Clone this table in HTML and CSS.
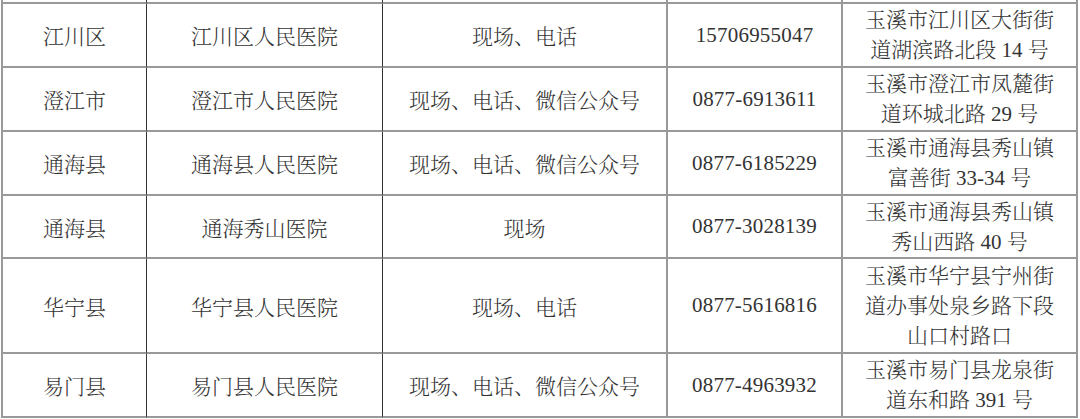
FILE: index.html
```html
<!DOCTYPE html>
<html lang="zh-CN">
<head>
<meta charset="utf-8">
<title>玉溪市医院</title>
<link rel="stylesheet" href="styles.css">
</head>
<body>
<div class="table">
  <div class="cell c1"></div><div class="cell c2"></div><div class="cell c3"></div><div class="cell c4"></div><div class="cell c5"></div>

  <div class="cell c1">江川区</div>
  <div class="cell c2">江川区人民医院</div>
  <div class="cell c3">现场、电话</div>
  <div class="cell c4 num">15706955047</div>
  <div class="cell c5 addr">玉溪市江川区大街街<br>道湖滨路北段 14 号</div>

  <div class="cell c1">澄江市</div>
  <div class="cell c2">澄江市人民医院</div>
  <div class="cell c3">现场、电话、微信公众号</div>
  <div class="cell c4 num">0877-6913611</div>
  <div class="cell c5 addr">玉溪市澄江市凤麓街<br>道环城北路 29 号</div>

  <div class="cell c1">通海县</div>
  <div class="cell c2">通海县人民医院</div>
  <div class="cell c3">现场、电话、微信公众号</div>
  <div class="cell c4 num">0877-6185229</div>
  <div class="cell c5 addr">玉溪市通海县秀山镇<br>富善街 33-34 号</div>

  <div class="cell c1">通海县</div>
  <div class="cell c2">通海秀山医院</div>
  <div class="cell c3">现场</div>
  <div class="cell c4 num">0877-3028139</div>
  <div class="cell c5 addr">玉溪市通海县秀山镇<br>秀山西路 40 号</div>

  <div class="cell c1">华宁县</div>
  <div class="cell c2">华宁县人民医院</div>
  <div class="cell c3">现场、电话</div>
  <div class="cell c4 num">0877-5616816</div>
  <div class="cell c5 addr">玉溪市华宁县宁州街<br>道办事处泉乡路下段<br>山口村路口</div>

  <div class="cell c1">易门县</div>
  <div class="cell c2">易门县人民医院</div>
  <div class="cell c3">现场、电话、微信公众号</div>
  <div class="cell c4 num">0877-4963932</div>
  <div class="cell c5 addr">玉溪市易门县龙泉街<br>道东和路 391 号</div>
</div>
</body>
</html>
```

FILE: styles.css
```css
html, body {
  margin: 0;
  padding: 0;
  background: #ffffff;
}

body {
  font-family: "Liberation Serif", "Noto Serif CJK SC", "Noto Sans CJK SC", serif;
  color: #333333;
  font-size: 21px;
  font-weight: 300;
}

.table {
  display: grid;
  margin-left: 1px;
  width: 1077px;
  border-left: 2px solid #999999;
  grid-template-columns: 144px 236px 285px 175px 235px;
  grid-template-rows: 4px 64px 64px 64px 63px 95px 64px;
}

.cell {
  display: flex;
  align-items: center;
  justify-content: center;
  text-align: center;
  border-bottom: 2px solid #999999;
  box-sizing: border-box;
  overflow: hidden;
}

.c1, .c2 {
  border-right: 1px solid #333333;
}

.c3, .c4, .c5 {
  border-right: 2px solid #999999;
}

.num {
  letter-spacing: 0.2px;
}

.addr {
  line-height: 30px;
}
```
